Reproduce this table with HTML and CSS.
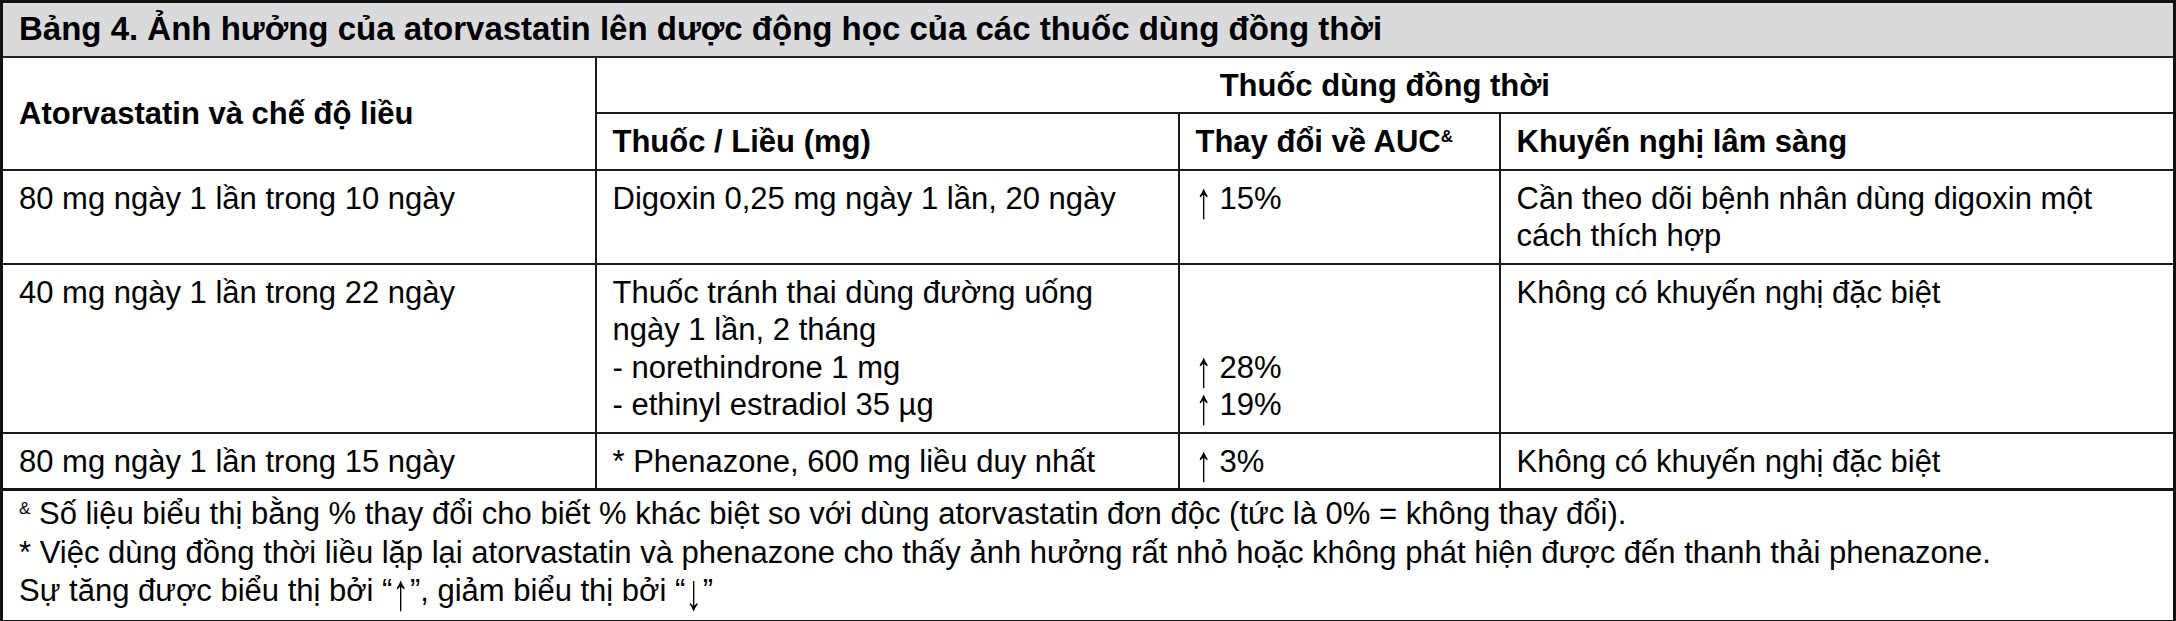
FILE: index.html
```html
<!DOCTYPE html>
<html lang="vi">
<head>
<meta charset="utf-8">
<title>Bảng 4</title>
<link rel="stylesheet" href="styles.css">
</head>
<body>
<table class="tbl">
  <colgroup>
    <col class="c1">
    <col class="c2">
    <col class="c3">
    <col class="c4">
  </colgroup>
  <tr class="r-title">
    <th colspan="4" class="title">Bảng 4. Ảnh hưởng của atorvastatin lên dược động học của các thuốc dùng đồng thời</th>
  </tr>
  <tr class="r-head1">
    <th rowspan="2" class="h-main">Atorvastatin và chế độ liều</th>
    <th colspan="3" class="h-group">Thuốc dùng đồng thời</th>
  </tr>
  <tr class="r-head2">
    <th class="h-sub">Thuốc / Liều (mg)</th>
    <th class="h-sub">Thay đổi về AUC<sup class="amp">&amp;</sup></th>
    <th class="h-sub">Khuyến nghị lâm sàng</th>
  </tr>
  <tr class="r-1">
    <td>80 mg ngày 1 lần trong 10 ngày</td>
    <td>Digoxin 0,25 mg ngày 1 lần, 20 ngày</td>
    <td><span class="arr">↑</span> 15%</td>
    <td>Cần theo dõi bệnh nhân dùng digoxin một<br>cách thích hợp</td>
  </tr>
  <tr class="r-2">
    <td>40 mg ngày 1 lần trong 22 ngày</td>
    <td>Thuốc tránh thai dùng đường uống<br>ngày 1 lần, 2 tháng<br>- norethindrone 1 mg<br>- ethinyl estradiol 35 µg</td>
    <td><div class="skip2"><span class="arr">↑</span> 28%<br><span class="arr">↑</span> 19%</div></td>
    <td>Không có khuyến nghị đặc biệt</td>
  </tr>
  <tr class="r-3">
    <td>80 mg ngày 1 lần trong 15 ngày</td>
    <td>* Phenazone, 600 mg liều duy nhất</td>
    <td><span class="arr">↑</span> 3%</td>
    <td>Không có khuyến nghị đặc biệt</td>
  </tr>
  <tr class="r-notes">
    <td colspan="4" class="notes">
      <div><sup class="amp">&amp;</sup> Số liệu biểu thị bằng % thay đổi cho biết % khác biệt so với dùng atorvastatin đơn độc (tức là 0% = không thay đổi).</div>
      <div>* Việc dùng đồng thời liều lặp lại atorvastatin và phenazone cho thấy ảnh hưởng rất nhỏ hoặc không phát hiện được đến thanh thải phenazone.</div>
      <div>Sự tăng được biểu thị bởi “<span class="arr arr-q">↑</span>”, giảm biểu thị bởi “<span class="arr arr-q">↓</span>”</div>
    </td>
  </tr>
</table>
</body>
</html>
```

FILE: styles.css
```css
html, body {
  margin: 0;
  padding: 0;
  background: #ffffff;
}

.tbl {
  width: 2176px;
  border-collapse: collapse;
  table-layout: fixed;
  border: 3px solid #111111;
  font-family: "Liberation Sans", Arial, sans-serif;
  font-size: 31px;
  line-height: 37.5px;
  color: #000000;
}

.c1 { width: 594px; }
.c2 { width: 583px; }
.c3 { width: 321px; }
.c4 { width: auto; }

.tbl th,
.tbl td {
  border: 2px solid #1a1a1a;
  padding: 9px 16px 8px 16px;
  text-align: left;
  vertical-align: top;
  font-weight: normal;
}

.tbl th {
  font-weight: bold;
}

.tbl .title {
  background: #d9dadc;
  font-size: 33px;
  padding: 7px 16px 8px 16px;
  vertical-align: middle;
  border-bottom: 2px solid #222222;
}

.tbl .h-main {
  vertical-align: middle;
}

.tbl .h-group {
  text-align: center;
  vertical-align: middle;
}

.tbl .h-sub {
  vertical-align: middle;
}

.amp {
  font-size: 17px;
  line-height: 0;
  vertical-align: 10px;
}

.arr {
  display: inline-block;
  line-height: 14px;
  transform: translateY(3px) scale(1.05, 1.65);
  transform-origin: 50% 60%;
  filter: grayscale(1);
}

.arr-q {
  margin: 0 1px;
}

.skip2 {
  padding-top: 75px;
}

.tbl .notes {
  padding: 4px 16px 9px 16px;
  line-height: 38.5px;
  border-top: 3px solid #111111;
}

.r-3 td {
  border-bottom: 3px solid #111111;
}
```
